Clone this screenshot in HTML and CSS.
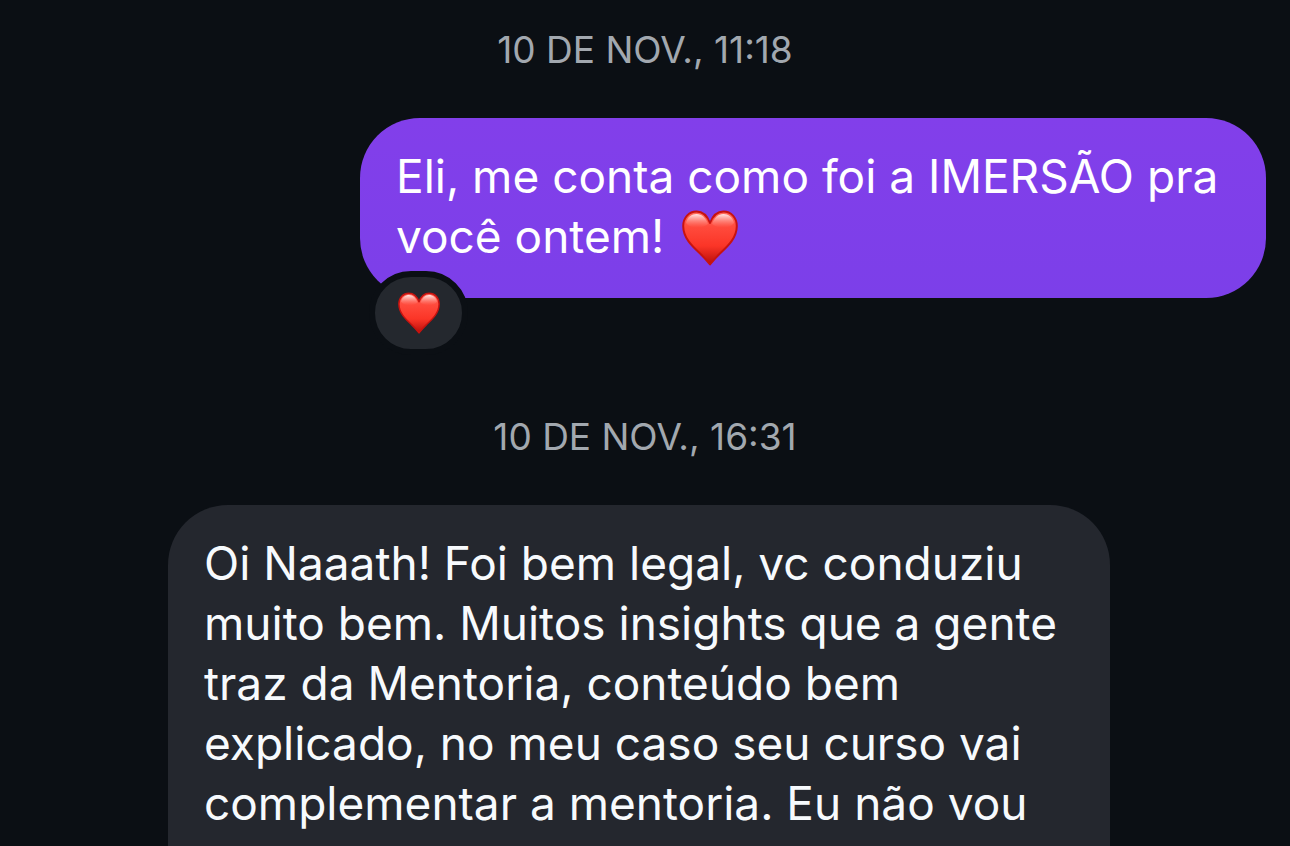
FILE: index.html
```html
<!DOCTYPE html>
<html lang="pt-BR">
<head>
<meta charset="utf-8">
<meta name="viewport" content="width=device-width, initial-scale=1">
<title>Conversa</title>
<link rel="stylesheet" href="styles.css">
</head>
<body>
<svg class="defs" aria-hidden="true">
  <defs>
    <linearGradient id="heart-fill" x1="0" y1="0" x2="0" y2="1">
      <stop offset="0" stop-color="#ff6a5c"/>
      <stop offset="0.3" stop-color="#ff4a3c"/>
      <stop offset="0.65" stop-color="#fb3527"/>
      <stop offset="1" stop-color="#b80e0a"/>
    </linearGradient>
    <linearGradient id="heart-shine" x1="0" y1="0" x2="0" y2="1">
      <stop offset="0" stop-color="#fff" stop-opacity="0.85"/>
      <stop offset="1" stop-color="#ff8a80" stop-opacity="0"/>
    </linearGradient>
    <symbol id="heart" viewBox="0 0 56 56">
      <path fill="url(#heart-fill)" stroke="#c8130f" stroke-width="2" stroke-linejoin="round" d="M28 13C25 5 20 1.500 14.500 1.500C7 1.500 1.200 7.500 1.200 16C1.200 28 10 36 18 43.500C22 47.200 26 52 28 54.500C30 52 34 47.200 38 43.500C46 36 54.800 28 54.800 16C54.800 7.500 49 1.500 41.500 1.500C36 1.500 31 5 28 13Z"/>
      <path fill="url(#heart-shine)" d="M4 13C5 7 10 4 14.500 4C20 4 24 8 26 14C20 19 8 19 4 13Z"/>
      <path fill="url(#heart-shine)" d="M52 13C51 7 46 4 41.500 4C36 4 32 8 30 14C36 19 48 19 52 13Z"/>
    </symbol>
  </defs>
</svg>
<main class="thread">
  <time class="stamp" datetime="11-10T11:18">10 DE NOV., 11:18</time>
  <div class="message message-sent">
    <p class="bubble bubble-sent">Eli, me conta como foi a IMERSÃO pra você ontem! <svg class="emoji" role="img" aria-label="Coração"><use href="#heart"/></svg></p>
    <span class="reaction"><svg class="reaction-icon" role="img" aria-label="Reação: coração"><use href="#heart"/></svg></span>
  </div>
  <time class="stamp" datetime="11-10T16:31">10 DE NOV., 16:31</time>
  <div class="message message-received">
    <p class="bubble bubble-received">Oi Naaath! Foi bem legal, vc conduziu muito bem. Muitos insights que a gente traz da Mentoria, conteúdo bem explicado, no meu caso seu curso vai complementar a mentoria. Eu não vou</p>
  </div>
</main>
</body>
</html>
```
FILE: styles.css
```css
* {
  box-sizing: border-box;
}

body {
  margin: 0;
  background: #0b0f14;
  color: #f7fafd;
  font-family: Inter, "Liberation Sans", sans-serif;
}

.defs {
  position: absolute;
  width: 0;
  height: 0;
}

.thread {
  display: flex;
  flex-direction: column;
  min-height: 100vh;
  padding: 28px 24px 0;
}

.stamp {
  align-self: center;
  color: #a2a8af;
  font-size: 37px;
  line-height: 44px;
}

.message {
  position: relative;
  display: flex;
  margin-top: 46px;
}

.message-sent {
  align-self: flex-end;
  margin-bottom: 117px;
}

.message-received {
  flex: 1;
  align-self: flex-start;
  margin-left: 144px;
}

.bubble {
  margin: 0;
  font-size: 46px;
  line-height: 60px;
}

.bubble-sent {
  max-width: 906px;
  padding: 28px 36px 32px;
  border-radius: 60px;
  background: linear-gradient(#823fea, #7c3fe9);
  color: #fff;
}

.bubble-received {
  max-width: 942px;
  padding: 28px 36px 0;
  border-radius: 60px 60px 0 0;
  background: #24272e;
}

.emoji {
  display: inline-block;
  width: 58px;
  height: 56px;
  margin: -8px 0 -4px 4px;
  vertical-align: middle;
}

.reaction {
  position: absolute;
  bottom: -57px;
  left: 9px;
  display: flex;
  align-items: center;
  justify-content: center;
  width: 99px;
  height: 84px;
  border: 6px solid #0b0f14;
  border-radius: 42px;
  background: #24282e;
}

.reaction-icon {
  width: 42px;
  height: 42px;
}
```
